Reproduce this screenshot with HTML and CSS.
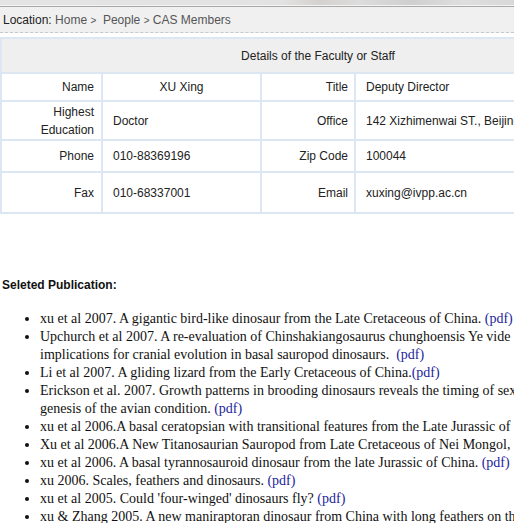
FILE: index.html
```html
<!DOCTYPE html>
<html lang="en">
<head>
<meta charset="utf-8">
<title>XU Xing - CAS Members</title>
<link rel="stylesheet" href="styles.css">
</head>
<body>
<div class="banner"></div>
<div class="location">
  <span class="loc-label">Location:</span>
  <a href="#">Home</a> <span class="sep">&gt;</span>&nbsp; <a href="#">People</a> <span class="sep">&gt;</span> <a href="#">CAS Members</a>
</div>

<table class="staff">
  <tr class="row-head">
    <th colspan="4">Details of the Faculty or Staff</th>
  </tr>
  <tr class="row-name">
    <td class="label">Name</td>
    <td class="value center">XU Xing</td>
    <td class="label">Title</td>
    <td class="value">Deputy Director</td>
  </tr>
  <tr class="row-edu">
    <td class="label">Highest<br>Education</td>
    <td class="value">Doctor</td>
    <td class="label">Office</td>
    <td class="value">142 Xizhimenwai ST., Beijing</td>
  </tr>
  <tr class="row-phone">
    <td class="label">Phone</td>
    <td class="value">010-88369196</td>
    <td class="label">Zip Code</td>
    <td class="value">100044</td>
  </tr>
  <tr class="row-fax">
    <td class="label">Fax</td>
    <td class="value">010-68337001</td>
    <td class="label">Email</td>
    <td class="value">xuxing@ivpp.ac.cn</td>
  </tr>
</table>

<div class="pubs">
  <p class="pubs-title">Seleted Publication:</p>
  <ul class="pub-list">
    <li>xu et al 2007. A gigantic bird-like dinosaur from the Late Cretaceous of China. <a href="#">(pdf)</a></li>
    <li>Upchurch et al 2007. A re-evaluation of Chinshakiangosaurus chunghoensis Ye vide Dong 1992 (Dinosauria, Sauropodomorpha): implications for cranial evolution in basal sauropod dinosaurs.&nbsp; <a href="#">(pdf)</a></li>
    <li>Li et al 2007. A gliding lizard from the Early Cretaceous of China.<a href="#">(pdf)</a></li>
    <li>Erickson et al. 2007. Growth patterns in brooding dinosaurs reveals the timing of sexual maturity in non-avian dinosaurs and genesis of the avian condition. <a href="#">(pdf)</a></li>
    <li>xu et al 2006.A basal ceratopsian with transitional features from the Late Jurassic of northwestern China. <a href="#">(pdf)</a></li>
    <li>Xu et al 2006.A New Titanosaurian Sauropod from Late Cretaceous of Nei Mongol, China. <a href="#">(pdf)</a></li>
    <li>xu et al 2006. A basal tyrannosauroid dinosaur from the late Jurassic of China. <a href="#">(pdf)</a></li>
    <li>xu 2006. Scales, feathers and dinosaurs. <a href="#">(pdf)</a></li>
    <li>xu et al 2005. Could 'four-winged' dinosaurs fly? <a href="#">(pdf)</a></li>
    <li>xu &amp; Zhang 2005. A new maniraptoran dinosaur from China with long feathers on the metatarsus. <a href="#">(pdf)</a></li>
  </ul>
</div>
</body>
</html>
```

FILE: styles.css
```css
html, body {
  overflow: hidden;
}

body {
  margin: 0;
  background: #fff;
  font-family: "Liberation Sans", Arial, sans-serif;
  font-size: 12px;
  color: #222;
}

/* header photo strip, cut off at the top of the page */
.banner {
  height: 5px;
  background: linear-gradient(90deg, #e4e4e4 0%, #e2e2e2 55%, #d4d2cf 62%, #dcdcdc 70%, #cfcfcf 80%, #dedede 90%, #d8d8d8 100%);
  border-bottom: 1px solid #f4f4f4;
}

.location {
  height: 25px;
  line-height: 26px;
  padding-left: 3px;
  background: #f0f0f0;
  border-top: 1px solid #a8a8a8;
  border-bottom: 1px dashed #c8c8c8;
  color: #555;
  white-space: nowrap;
}

.location .loc-label {
  color: #222;
}

.location a {
  color: #555;
  text-decoration: none;
}

.location .sep {
  font-size: 10px;
}

/* staff details table */
.staff {
  margin-top: 4px;
  width: 636px;
  border-spacing: 2px;
  background: #dce7f3;
  color: #222;
  font-size: 12px;
}

.staff th {
  height: 33px;
  padding: 0;
  background: #efefef;
  font-weight: normal;
  text-align: center;
}

.staff td {
  background: #fff;
  padding: 0;
  line-height: 18px;
}

.staff .label {
  width: 92px;
  padding-right: 7px;
  text-align: right;
}

.staff tr > td:nth-child(2) {
  width: 147px;
}

.staff tr > td:nth-child(3) {
  width: 86px;
  padding-right: 6px;
}

.staff .value {
  padding-left: 10px;
  text-align: left;
  white-space: nowrap;
}

.staff .value.center {
  padding-left: 0;
  text-align: center;
}

.row-name td { height: 26px; }
.row-edu td { height: 37px; }
.row-phone td { height: 30px; }
.row-fax td { height: 39px; }

/* publication list */
.pubs {
  width: 770px;
  margin-top: 64px;
}

.pubs-title {
  margin: 0 0 0 2px;
  font-weight: bold;
  font-size: 12px;
  line-height: 14px;
  color: #111;
}

.pub-list {
  margin: 18px 0 0;
  padding-left: 40px;
  font-family: "Liberation Serif", "Times New Roman", serif;
  font-size: 14px;
  line-height: 18px;
  color: #111;
}

.pub-list a {
  color: #23239b;
  text-decoration: none;
}
```
